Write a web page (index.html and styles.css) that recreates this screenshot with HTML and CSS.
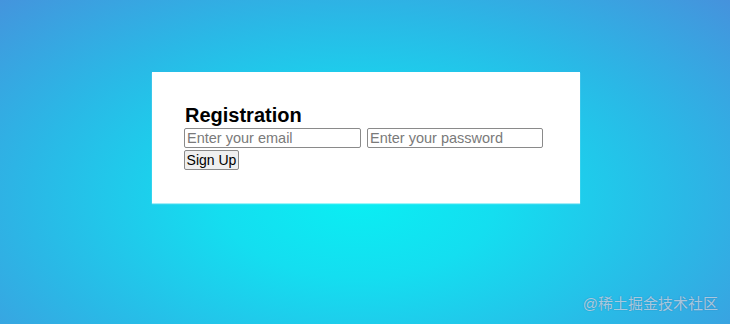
FILE: index.html
```html
<!DOCTYPE html>
<html>
<head>
<meta charset="utf-8">
<link rel="stylesheet" href="styles.css">
</head>
<body>
<div class="page">
  <div class="card">
    <h2 class="title">Registration</h2>
    <div class="fields">
      <input class="field field-email" type="email" placeholder="Enter your email">
      <input class="field field-pass" type="password" placeholder="Enter your password">
    </div>
    <button class="btn">Sign Up</button>
  </div>
  <div class="watermark">@稀土掘金技术社区</div>
</div>
</body>
</html>
```
FILE: styles.css
```css
html, body {
  margin: 0;
  padding: 0;
}
body {
  width: 730px;
  height: 324px;
  overflow: hidden;
  font-family: "Liberation Sans", Arial, sans-serif;
}
.page {
  position: relative;
  width: 730px;
  height: 324px;
  box-sizing: border-box;
  padding-top: 72px;
  display: flex;
  justify-content: center;
  align-items: flex-start;
  background: radial-gradient(ellipse 75% 95% at 49% 62%, #0aeef3 0%, #14def0 25%, #2ab8e6 60%, #4a8cdb 100%);
}
.card {
  width: 428px;
  margin-left: 2px;
  box-sizing: border-box;
  background: #fff;
  padding: 32px 32px 33px 32px;
  box-shadow: 0 1px 1px rgba(255,255,255,0.6);
}
.title {
  margin: 0;
  font-size: 20px;
  line-height: 23px;
  font-weight: bold;
  color: #000;
  padding-left: 1px;
}
.fields {
  display: flex;
  gap: 6px;
  margin-top: 1px;
}
.field {
  box-sizing: border-box;
  height: 20px;
  margin: 0;
  padding: 0 2px;
  border: 1px solid #8a8a8a;
  border-radius: 2px;
  font-family: "Liberation Sans", Arial, sans-serif;
  font-size: 14.5px;
  color: #000;
  background: #fff;
}
.field::placeholder {
  color: #7a7a7a;
}
.field-email {
  width: 177px;
}
.field-pass {
  width: 176px;
}
.btn {
  display: block;
  box-sizing: border-box;
  margin-top: 2px;
  width: 55px;
  height: 20px;
  padding: 0;
  white-space: nowrap;
  text-align: center;
  border: 1px solid #8a8a8a;
  border-radius: 2px;
  background: #efefef;
  font-family: "Liberation Sans", Arial, sans-serif;
  font-size: 14px;
  line-height: 18px;
  color: #000;
}
.watermark {
  position: absolute;
  right: 12px;
  bottom: 11px;
  font-family: "Liberation Sans", "Noto Sans CJK SC", sans-serif;
  font-size: 15px;
  line-height: 18px;
  color: rgba(255,255,255,0.6);
  text-shadow: 0 0 1px rgba(40,80,140,0.7);
}
```
